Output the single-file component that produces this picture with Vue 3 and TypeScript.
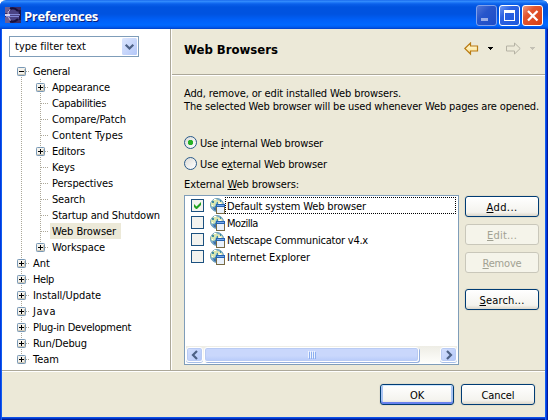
<script setup lang="ts">
interface Node {
  label: string
  width: number
  depth: number
  box?: '+' | '-'
  selected?: boolean
}

const tree: Node[] = [
  { label: 'General', width: 37, depth: 0, box: '-' },
  { label: 'Appearance', width: 58, depth: 1, box: '+' },
  { label: 'Capabilities', width: 54, depth: 1 },
  { label: 'Compare/Patch', width: 74, depth: 1 },
  { label: 'Content Types', width: 71, depth: 1 },
  { label: 'Editors', width: 33, depth: 1, box: '+' },
  { label: 'Keys', width: 23, depth: 1 },
  { label: 'Perspectives', width: 61, depth: 1 },
  { label: 'Search', width: 33, depth: 1 },
  { label: 'Startup and Shutdown', width: 108, depth: 1 },
  { label: 'Web Browser', width: 64, depth: 1, selected: true },
  { label: 'Workspace', width: 53, depth: 1, box: '+' },
  { label: 'Ant', width: 17, depth: 0, box: '+' },
  { label: 'Help', width: 21, depth: 0, box: '+' },
  { label: 'Install/Update', width: 68, depth: 0, box: '+' },
  { label: 'Java', width: 23, depth: 0, box: '+' },
  { label: 'Plug-in Development', width: 98, depth: 0, box: '+' },
  { label: 'Run/Debug', width: 54, depth: 0, box: '+' },
  { label: 'Team', width: 26, depth: 0, box: '+' },
]

const browsers = [
  { name: 'Default system Web browser', width: 139, checked: true },
  { name: 'Mozilla', width: 31, checked: false },
  { name: 'Netscape Communicator v4.x', width: 141, checked: false },
  { name: 'Internet Explorer', width: 83, checked: false },
]

const actions = [
  { key: 'A', rest: 'dd...', width: 31, off: false },
  { key: 'E', rest: 'dit...', width: 30, off: true },
  { key: 'R', rest: 'emove', width: 39, off: true },
  { key: 'S', rest: 'earch...', width: 45, off: false },
]

// Spreads a label's letters so that it takes the given advance width.
const vFit = {
  mounted(el: HTMLElement, binding: { value: number }) {
    const n = (el.textContent ?? '').length
    const natural = el.getBoundingClientRect().width
    if (n > 0) el.style.letterSpacing = `${(binding.value - natural) / n}px`
  },
}
</script>

<template>
  <div class="window">
    <header class="titlebar">
      <svg class="logo" width="16" height="16" viewBox="0 0 16 16">
        <rect width="16" height="16" fill="#3a2a62" />
        <path d="M0 0h5v3H3v3H0zM0 10h3l2 3v3H0z" fill="#6d5f92" />
        <circle cx="9" cy="8" r="6" fill="#4b4384" />
        <path d="M5 2Q9 0 13 4M5 14q4 2 8-2" stroke="#17103c" stroke-width="2" fill="none" />
        <path d="M5 2.500Q2.500 5 3 8t2.500 5.500" stroke="#d6c8e8" fill="none" />
        <path d="M0 7h15v1H0zM1 9h14v1H1z" fill="#8187d3" />
        <path d="M0 7h5v2H0z" fill="#d8d2f0" />
        <path d="M13 3h3v10h-2V9h1V7h-1z" fill="#211641" />
      </svg>
      <span v-fit="74" class="caption">Preferences</span>
      <div class="wbtns">
        <svg width="21" height="21" viewBox="0 0 21 21">
          <defs>
            <linearGradient id="min" x2="1" y2="1"><stop stop-color="#5478d8" /><stop offset=".4" stop-color="#2856cb" /><stop offset="1" stop-color="#1c4bc8" /></linearGradient>
          </defs>
          <rect x=".5" y=".5" width="20" height="20" rx="2.500" fill="url(#min)" stroke="#7fa0eb" />
          <rect x="5" y="13" width="7" height="3" fill="#9aaee8" />
        </svg>
        <svg width="21" height="21" viewBox="0 0 21 21">
          <defs>
            <linearGradient id="max" x2="1" y2="1"><stop stop-color="#759df5" /><stop offset=".35" stop-color="#2d62e2" /><stop offset="1" stop-color="#1c58dc" /></linearGradient>
          </defs>
          <rect x=".5" y=".5" width="20" height="20" rx="2.500" fill="url(#max)" stroke="#fff" />
          <path d="M5 5h11v11H5zM6 8v7h9V8z" fill="#fff" fill-rule="evenodd" />
        </svg>
        <svg width="21" height="21" viewBox="0 0 21 21">
          <defs>
            <linearGradient id="cls" x2="1" y2="1"><stop stop-color="#f0a088" /><stop offset=".35" stop-color="#e3562f" /><stop offset="1" stop-color="#d53e12" /></linearGradient>
          </defs>
          <rect x=".5" y=".5" width="20" height="20" rx="2.500" fill="url(#cls)" stroke="#fff" />
          <path d="M6 6l9.500 9.500M15.500 6L6 15.500" stroke="#fff" stroke-width="2.300" />
        </svg>
      </div>
    </header>

    <div class="main">
      <aside class="side">
        <div class="combo">
          <span v-fit="71" class="combo-text">type filter text</span>
          <svg width="15" height="17" viewBox="0 0 15 17">
            <defs><linearGradient id="cb" x2="1" y2="1"><stop stop-color="#dce6fe" /><stop offset="1" stop-color="#b3c7f8" /></linearGradient></defs>
            <rect width="15" height="17" rx="1.500" fill="url(#cb)" />
            <path d="M3.700 6.700L7.500 10.500 11.300 6.700" stroke="#4d6185" stroke-width="2.200" fill="none" />
          </svg>
        </div>
        <ul class="tree">
          <li v-for="(n, i) in tree" :key="n.label" class="row">
            <svg class="guide" :width="n.depth ? 36 : 17" height="16">
              <g stroke="#aca899" stroke-dasharray="1 1">
                <path v-if="i > 0 && i < tree.length - 1" d="M4.500 0v16" />
                <path v-else-if="i === 0" d="M4.500 8v8" />
                <path v-else d="M4.500 0v8" />
                <path v-if="n.depth" :d="n.label === 'Workspace' ? 'M23.500 0v8' : 'M23.500 0v16'" />
                <path :d="n.depth ? 'M24 8.500h8' : 'M5 8.500h8'" />
              </g>
              <g v-if="n.box" :transform="n.depth ? 'translate(19 4)' : 'translate(0 4)'">
                <rect x=".5" y=".5" width="8" height="8" rx=".8" fill="#f4f2ec" stroke="#7898b5" />
                <path d="M1 7h7v1H1zM7 2h1v6H7z" fill="#cfc9b9" />
                <path d="M2 4h5v1H2z" fill="#000" />
                <path v-if="n.box === '+'" d="M4 2h1v5H4z" fill="#000" />
              </g>
            </svg>
            <span class="node" :class="{ selected: n.selected }"><span v-fit="n.width">{{ n.label }}</span></span>
          </li>
        </ul>
      </aside>

      <section class="page">
        <div class="head">
          <h1><span v-fit="94">Web Browsers</span></h1>
          <svg width="71" height="14" viewBox="0 0 71 14">
            <defs><linearGradient id="bk" y2="1" x2="0"><stop stop-color="#fffbe0" /><stop offset="1" stop-color="#fbe08a" /></linearGradient></defs>
            <path d="M.8 6.500L6.500 1v3h7v5h-7v3z" fill="url(#bk)" stroke="#b97b13" stroke-width="1.200" />
            <path d="M24 5h5v1h-1v1h-1v1h-1V7h-1V6h-1z" fill="#000" />
            <path d="M56.200 6.500L50.500 1v3h-8v5h8v3z" fill="none" stroke="#b5b2a4" />
            <path d="M66 5h5v1h-1v1h-1v1h-1V7h-1V6h-1z" fill="#c4c1b5" />
          </svg>
        </div>
        <div class="body">
          <p><span v-fit="217">Add, remove, or edit installed Web browsers.</span></p>
          <p><span v-fit="355">The selected Web browser will be used whenever Web pages are opened.</span></p>
          <div class="radio first">
            <i class="dot on"></i><span v-fit="123">Use <u>i</u>nternal Web browser</span>
          </div>
          <div class="radio">
            <i class="dot"></i><span v-fit="127">Use e<u>x</u>ternal Web browser</span>
          </div>
          <div class="lbl"><span v-fit="115">External <u>W</u>eb browsers:</span></div>
          <div class="cols">
            <div class="list">
              <div class="items">
                <div v-for="(b, i) in browsers" :key="b.name" class="item">
                  <svg class="check" width="13" height="13" viewBox="0 0 13 13">
                    <rect x=".5" y=".5" width="12" height="12" fill="#f3f3ef" stroke="#1c5180" />
                    <path v-if="b.checked" d="M3 5v3l2 2h1l4-4V3L5.500 7.500z" fill="#21a121" />
                  </svg>
                  <svg class="globe" width="16" height="16" viewBox="0 0 16 16">
                    <circle cx="7" cy="7" r="6.500" fill="#72acd2" stroke="#6d9eb4" />
                    <path d="M1 5q2-4 6-4l1 2-2 2-1 3-2 1-2-1z" fill="#d9e6b0" />
                    <path d="M8 2l4 2 1 3-3-1-2 1-1-2z" fill="#ecebb4" />
                    <path d="M3 9l3 1 1 3-3-1z" fill="#3e6fac" />
                    <path d="M2 3h2v2H2zM7 4h1v3H7zM10 2h1v2h-1zM5 8h1v2H5z" fill="#3f8ca0" />
                    <path d="M4 1h2v1H4zM9 5h2v1H9zM2 7h1v1H2z" fill="#fff" />
                    <path d="M6 6h9v10H6z" fill="#786a43" />
                    <path d="M6 6h9v3H6z" fill="#2461b0" />
                    <path d="M7 7h7v1H7z" fill="#75aaeb" />
                    <path d="M7 9h7v6H7z" fill="#e9f1fb" />
                  </svg>
                  <span class="name" :class="{ focus: i === 0 }"><span v-fit="b.width">{{ b.name }}</span></span>
                </div>
              </div>
              <div class="scroll">
                <div class="sbtn"><svg width="8" height="10" viewBox="0 0 8 10"><path d="M6 1L2 5l4 4" stroke="#4d6185" stroke-width="2.200" fill="none" /></svg></div>
                <div class="thumb"><i v-for="k in 4" :key="k"></i></div>
                <div class="sbtn end"><svg width="8" height="10" viewBox="0 0 8 10"><path d="M2 1l4 4-4 4" stroke="#4d6185" stroke-width="2.200" fill="none" /></svg></div>
              </div>
            </div>
            <div class="actions">
              <button v-for="a in actions" :key="a.key" class="btn" :class="{ off: a.off }">
                <span v-fit="a.width"><u>{{ a.key }}</u>{{ a.rest }}</span>
              </button>
            </div>
          </div>
        </div>
      </section>
    </div>

    <footer class="foot">
      <button class="btn default"><span v-fit="14">OK</span></button>
      <button class="btn"><span v-fit="33">Cancel</span></button>
    </footer>
  </div>
</template>

<style>
body {
  margin: 0;
  overflow: hidden;
  background: #fff;
}
</style>

<style scoped>
.window {
  box-sizing: border-box;
  width: 548px;
  height: 420px;
  display: flex;
  flex-direction: column;
  background: linear-gradient(90deg, #0138dd 0 1px, #0f5cf0 1px 2px, transparent 2px 545px, #0f5cf0 545px 546px, #0138dd 546px 547px, #001c9a 547px),
    linear-gradient(180deg, #ece9d8 0 417px, #0f50e8 417px 418px, #0138c8 418px 419px, #001890 419px);
  border-radius: 6px 6px 0 0;
  overflow: hidden;
  font-family: Tahoma, "DejaVu Sans Condensed", "DejaVu Sans", sans-serif;
  font-stretch: condensed;
  font-size: 11px;
  line-height: 14px;
  color: #000;
}
span {
  white-space: nowrap;
}
u {
  text-decoration: underline;
  text-decoration-thickness: 1px;
  text-underline-offset: 1px;
}
.titlebar {
  box-sizing: border-box;
  height: 29px;
  flex: none;
  display: flex;
  align-items: center;
  padding: 1px 5px 0;
  background: linear-gradient(180deg, #0a5ae8 0, #3b92fc 1px, #2580fb 2px, #0a60ea 4px, #0053df 7px, #0053e0 14px, #0060f8 20px, #0068ff 25px, #005cf0 27px, #003fc8 29px);
}
.caption {
  margin: 1px 0 0 3px;
  font: bold 13px/16px "Trebuchet MS", "Open Sans", "Noto Sans", sans-serif;
  color: #fff;
  text-shadow: 1px 1px 0 #0a1f7c;
}
.wbtns {
  display: flex;
  gap: 2px;
  margin-left: auto;
}
.main {
  height: 341px;
  margin: 0 3px 0 2px;
  display: flex;
  flex: none;
}
.side {
  box-sizing: border-box;
  width: 169px;
  background: #fff;
  border-right: 1px solid #aca899;
  padding: 7px 0 0 7px;
}
.combo {
  box-sizing: border-box;
  width: 130px;
  height: 21px;
  border: 1px solid #7f9db9;
  display: flex;
  align-items: center;
  justify-content: space-between;
  padding: 0 1px 0 5px;
}
.combo svg {
  display: block;
}
.combo-text {
  margin-top: 1px;
}
.tree {
  list-style: none;
  margin: 6px 0 0 8px;
  padding: 0;
}
.row {
  height: 16px;
  display: flex;
}
.guide {
  display: block;
  flex: none;
  margin-right: -3px;
}
.node {
  height: 16px;
  line-height: 18px;
  padding: 0 5px 0 2px;
}
.selected {
  background: #ece9d8;
}
.page {
  flex: 1;
  border-left: 1px solid #fff;
}
.head {
  box-sizing: border-box;
  height: 46px;
  display: flex;
  justify-content: space-between;
  align-items: flex-start;
  padding: 13px 10px 0 12px;
  border-bottom: 1px solid #aca899;
  box-shadow: 0 1px #fff;
}
h1 {
  margin: 0;
  font: bold 13px/16px Tahoma, "DejaVu Sans Condensed", "DejaVu Sans", sans-serif;
  font-stretch: condensed;
}
.body {
  padding: 12px 0 0 12px;
}
p {
  margin: 0;
  height: 13px;
  line-height: 13px;
}
.radio {
  display: flex;
  align-items: center;
  height: 21px;
  gap: 3px;
}
.radio span {
  margin-top: 2px;
}
.first {
  margin-top: 19px;
}
.dot {
  box-sizing: border-box;
  width: 13px;
  height: 13px;
  border: 1px solid #28598a;
  border-radius: 50%;
  background: linear-gradient(135deg, #dcdcd7, #fff);
}
.dot.on {
  background: radial-gradient(circle, #27b127 0 2.4px, transparent 3px), linear-gradient(135deg, #dcdcd7, #fff);
}
.lbl {
  margin-top: 4px;
  height: 16px;
}
.cols {
  display: flex;
  gap: 6px;
  margin-top: 1px;
}
.list {
  box-sizing: border-box;
  width: 275px;
  height: 170px;
  border: 1px solid #7f9db9;
  background: #fff;
  padding: 1px;
  display: flex;
  flex-direction: column;
  justify-content: space-between;
}
.item {
  height: 17px;
  display: flex;
}
.check {
  margin: 2px 6px 0 5px;
}
.globe {
  margin-top: 1px;
}
.check,
.globe {
  flex: none;
}
.name {
  box-sizing: border-box;
  height: 17px;
  line-height: 17px;
  padding-left: 1px;
  border: 1px solid transparent;
  margin-left: -1px;
}
.focus {
  flex: 1;
  margin-right: 1px;
  border: 1px dotted #000;
}
.scroll {
  height: 17px;
  display: flex;
  background: linear-gradient(180deg, #eeede5, #fefefb);
}
.sbtn,
.thumb {
  box-sizing: border-box;
  height: 15px;
  margin-top: 1px;
  border: 1px solid #fff;
  border-radius: 3px;
  background: linear-gradient(135deg, #d5e0fd, #b3c8fa);
  box-shadow: inset 0 0 0 1px #b9cbf3, 0 1px #a6bfe9;
  display: flex;
  align-items: center;
  justify-content: center;
}
.sbtn {
  width: 17px;
}
.thumb {
  width: 215px;
  gap: 1px;
  margin-left: 1px;
  background: linear-gradient(180deg, #c9d7fc 0 60%, #b7cafa);
  box-shadow: inset 0 0 0 1px #b9cbf3, 1px 1px #94afdf;
}
.thumb i {
  width: 1px;
  height: 7px;
  background: #eef4fe;
  box-shadow: 1px 1px #8caef0;
}
.end {
  margin-left: auto;
}
.actions {
  display: flex;
  flex-direction: column;
  gap: 7px;
  padding-top: 1px;
}
.actions .btn:last-child {
  margin-top: 9px;
}
.btn {
  box-sizing: border-box;
  width: 74px;
  height: 21px;
  padding: 1px 0 0;
  border: 1px solid #003c74;
  border-radius: 3px;
  background: linear-gradient(180deg, #fff, #f4f3ee 80%, #dcd7cb);
  box-shadow: 0 0 0 1px #e2dfcf;
  font: inherit;
  font-stretch: condensed;
  line-height: 17px;
  color: #000;
  text-align: center;
}
.off {
  background: #f5f4ea;
  border-color: #c9c7ba;
  color: #a1a192;
  box-shadow: none;
}
.default {
  box-shadow: inset 0 1px #cee7ff, inset 0 -2px #6982ee, inset 2px 0 #a9c4f3, inset -2px 0 #a9c4f3, 0 0 0 1px #e2dfcf;
}
.foot {
  height: 46px;
  flex: none;
  box-sizing: border-box;
  margin: 0 3px 0 2px;
  border-top: 1px solid #aca899;
  box-shadow: inset 0 1px #fff;
  display: flex;
  justify-content: flex-end;
  gap: 7px;
  padding: 13px 10px 0 0;
}
</style>
